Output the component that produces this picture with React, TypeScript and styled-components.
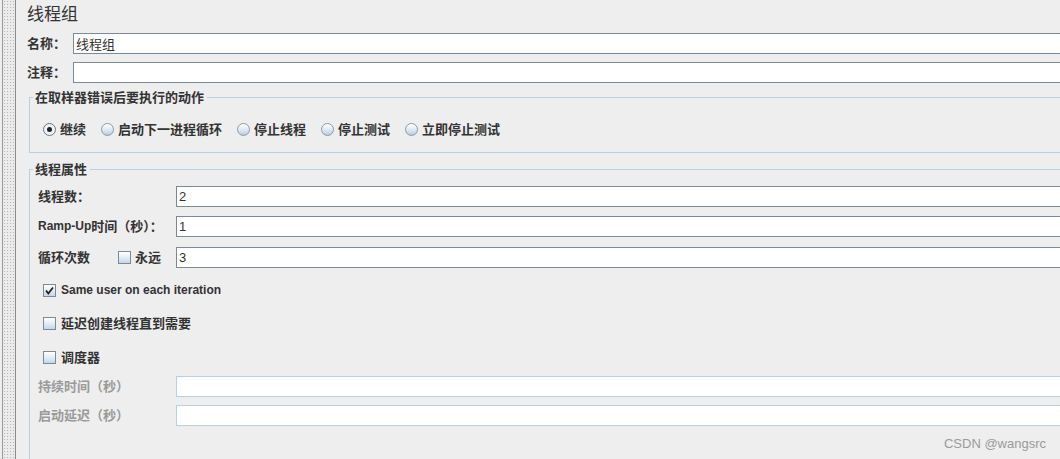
import React from "react";
import styled, { createGlobalStyle } from "styled-components";

const GlobalStyle = createGlobalStyle`
  html, body { margin: 0; padding: 0; background: #eeeeee; overflow: hidden; }
  body { font-family: "Liberation Sans", "Noto Sans CJK SC", sans-serif; color: #333; }
  #root { height: 459px; }
`;

const Page = styled.div`
  display: flex;
  height: 459px;
  position: relative;
  overflow: hidden;
`;

const Strip = styled.div`
  flex: 0 0 12px;
  margin-left: 2px;
  border-left: 1px solid #9a9a9a;
  border-right: 1px solid #8a8a8a;
  background-color: #ececec;
  background-image: radial-gradient(circle, #b4b4b4 0.7px, transparent 0.9px);
  background-size: 3px 3px;
`;

const Main = styled.div`
  flex: 1;
  min-width: 0;
  padding-left: 11px;
  margin-right: -30px;
  display: flex;
  flex-direction: column;
`;

const Title = styled.h1`
  margin: 4px 0 0;
  font-size: 17px;
  font-weight: 400;
  line-height: 22px;
  color: #333;
`;

const FieldRow = styled.div<{ $gap: number }>`
  display: flex;
  align-items: center;
  height: 21px;
  margin-top: ${(p) => p.$gap}px;
`;

const Label = styled.label<{ $w: number; $dim?: boolean }>`
  flex: 0 0 ${(p) => p.$w}px;
  display: flex;
  align-items: center;
  font-size: 13px;
  font-weight: 700;
  line-height: 15px;
  color: ${(p) => (p.$dim ? "#9a9a9a" : "#333")};
  white-space: nowrap;
`;

const TextInput = styled.input<{ $dim?: boolean }>`
  flex: 1;
  min-width: 0;
  height: 21px;
  box-sizing: border-box;
  border: 1px solid ${(p) => (p.$dim ? "#b8cfe5" : "#7a8a99")};
  background: #fff;
  padding: 0 2px;
  font-family: "Liberation Sans", "Noto Sans CJK SC", sans-serif;
  font-size: 13px;
  color: #333;
  outline: none;
`;

const Group = styled.fieldset<{ $gap: number; $bottom: number }>`
  margin: ${(p) => p.$gap}px 0 0 2px;
  padding: 0 0 ${(p) => p.$bottom}px;
  border: 1px solid #b8cfe5;
  min-width: 0;
`;

const Legend = styled.legend`
  margin-left: 3px;
  padding: 0 3px 0 2px;
  font-size: 13px;
  font-weight: 700;
  line-height: 15px;
  color: #333;
`;

const RadioBar = styled.div`
  display: flex;
  align-items: center;
  gap: 15px;
  padding: 17px 0 0 13px;
`;

const Choice = styled.label`
  display: flex;
  align-items: center;
  gap: 4px;
  font-size: 13px;
  font-weight: 700;
  line-height: 15px;
  color: #333;
  white-space: nowrap;
`;

const Radio = styled.span<{ $on?: boolean }>`
  width: 13px;
  height: 13px;
  box-sizing: border-box;
  border-radius: 50%;
  border: 1px solid ${(p) => (p.$on ? "#6a7a8a" : "#8a9aaa")};
  background: ${(p) =>
    p.$on ? "#eef2f6" : "linear-gradient(180deg, #ffffff 0%, #dde7f1 55%, #b9cde0 100%)"};
  display: inline-flex;
  align-items: center;
  justify-content: center;
  &::after {
    content: "";
    width: 5px;
    height: 5px;
    border-radius: 50%;
    background: #222;
    display: ${(p) => (p.$on ? "block" : "none")};
  }
`;

const Box = styled.span`
  flex: 0 0 13px;
  width: 13px;
  height: 13px;
  box-sizing: border-box;
  border: 1px solid #7a8a99;
  background: linear-gradient(180deg, #ffffff 0%, #e4ecf4 50%, #c4d6e8 100%);
  display: inline-flex;
  align-items: center;
  justify-content: center;
`;

const Props = styled.div`
  padding: 9px 0 0 8px;
  display: flex;
  flex-direction: column;
`;

const CheckRow = styled.div<{ $gap: number }>`
  display: flex;
  align-items: center;
  gap: 5px;
  height: 15px;
  margin-top: ${(p) => p.$gap}px;
  padding-left: 5px;
  font-size: 13px;
  font-weight: 700;
  line-height: 15px;
  color: #333;
`;

const LatinText = styled.span`
  font-size: 12px;
  font-weight: 700;
`;

const InlineCheck = styled.span`
  display: flex;
  align-items: center;
  gap: 4px;
  margin-left: 28px;
`;

const Watermark = styled.div`
  position: absolute;
  right: 14px;
  bottom: 8px;
  font-family: "Liberation Sans", sans-serif;
  font-size: 13px;
  color: #9a9a9a;
`;

const Check = () => (
  <svg width="9" height="9" viewBox="0 0 9 9">
    <path d="M1 4.5 L3.3 7.5 L8 1.5" fill="none" stroke="#222" strokeWidth="1.8" />
  </svg>
);

export default function App() {
  return (
    <>
      <GlobalStyle />
      <Page>
        <Strip />
        <Main>
          <Title>线程组</Title>
          <FieldRow $gap={7}>
            <Label $w={46}>名称：</Label>
            <TextInput defaultValue="线程组" />
          </FieldRow>
          <FieldRow $gap={8}>
            <Label $w={46}>注释：</Label>
            <TextInput defaultValue="" />
          </FieldRow>

          <Group $gap={7} $bottom={15}>
            <Legend>在取样器错误后要执行的动作</Legend>
            <RadioBar>
              <Choice><Radio $on />继续</Choice>
              <Choice><Radio />启动下一进程循环</Choice>
              <Choice><Radio />停止线程</Choice>
              <Choice><Radio />停止测试</Choice>
              <Choice><Radio />立即停止测试</Choice>
            </RadioBar>
          </Group>

          <Group $gap={9} $bottom={60}>
            <Legend>线程属性</Legend>
            <Props>
              <FieldRow $gap={0}>
                <Label $w={138}>线程数：</Label>
                <TextInput defaultValue="2" />
              </FieldRow>
              <FieldRow $gap={9}>
                <Label $w={138}><LatinText>Ramp-Up</LatinText>时间（秒）：</Label>
                <TextInput defaultValue="1" />
              </FieldRow>
              <FieldRow $gap={10}>
                <Label $w={138}>
                  循环次数
                  <InlineCheck><Box />永远</InlineCheck>
                </Label>
                <TextInput defaultValue="3" />
              </FieldRow>
              <CheckRow $gap={15}>
                <Box><Check /></Box>
                <LatinText>Same user on each iteration</LatinText>
              </CheckRow>
              <CheckRow $gap={18}>
                <Box />延迟创建线程直到需要
              </CheckRow>
              <CheckRow $gap={19}>
                <Box />调度器
              </CheckRow>
              <FieldRow $gap={11}>
                <Label $w={138} $dim>持续时间（秒）</Label>
                <TextInput $dim defaultValue="" />
              </FieldRow>
              <FieldRow $gap={8}>
                <Label $w={138} $dim>启动延迟（秒）</Label>
                <TextInput $dim defaultValue="" />
              </FieldRow>
            </Props>
          </Group>
        </Main>
        <Watermark>CSDN @wangsrc</Watermark>
      </Page>
    </>
  );
}
